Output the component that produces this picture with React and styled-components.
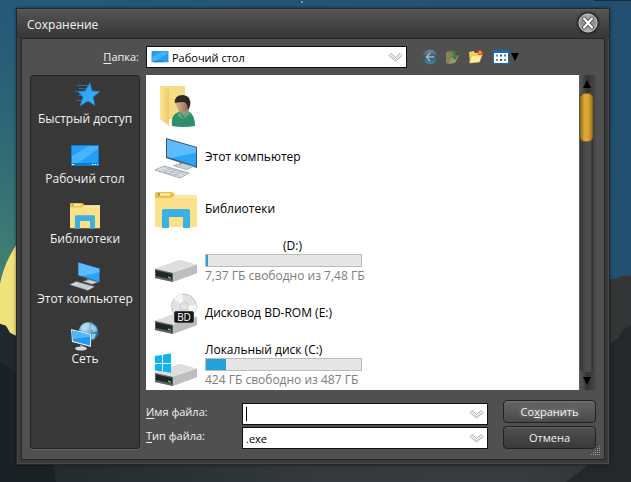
import React from 'react';
import styled, { createGlobalStyle } from 'styled-components';

const colors = {
  frame: '#3a3a3a',
  frameDark: '#262626',
  client: '#505050',
  panel: '#383838',
  text: '#f2f2f2',
  blue: '#26a0da',
};

const fonts = {
  ui: '"Open Sans", "Noto Sans", sans-serif',
};

const GlobalStyle = createGlobalStyle`
  * {
    box-sizing: border-box;
  }
  body {
    margin: 0;
    font-family: ${fonts.ui};
    font-size: 12px;
  }
  button, input, select {
    font: inherit;
  }
`;

/* ---------- icons ---------- */

const StarIcon = () => (
  <svg width="30" height="30" viewBox="0 0 30 30">
    <defs>
      <linearGradient id="star" x1="0" y1="0" x2="1" y2="1">
        <stop offset="0" stopColor="#2b9bf0" />
        <stop offset="1" stopColor="#39b2ff" />
      </linearGradient>
    </defs>
    <path d="M7 4.500h11M9 7.500h8M5 10.500h7M8 14.500h6M6 19.500h5" stroke="#2270ad" strokeWidth="1" />
    <path d="M20 2l2 8 8 .5-7 5.500 2 8.500-7-4.500-8 5 3-9-5-5.500 7-.5z" fill="url(#star)" stroke="#1c7ccc" strokeWidth=".7" />
  </svg>
);

const DesktopIcon = ({ width = 30, height = 30 }) => (
  <svg width={width} height={height} viewBox="0 0 30 30" preserveAspectRatio="none">
    <path d="M1 4h28v21H1z" fill="#0f7ed2" />
    <path d="M2 5h26v17H2z" fill="#22a0f8" />
    <path d="M2 22V15L19 5h9v3L8 22z" fill="#48b4ff" />
    <path d="M2 23.500h2M22 23.500h1.500M24.500 23.500h1.500M27 23.500h1" stroke="#fff" strokeWidth="1" />
  </svg>
);

const LibraryIcon = ({ size = 30 }) => (
  <svg width={size} height={size} viewBox="0 0 42 42">
    <path d="M0 5q0-2 2-2h14q3 0 4 3H42v31q0 1-1 1H1q-1 0-1-1z" fill="#fbe08c" />
    <path d="M0 5q0-2 2-2h14q2 0 4 3-2 3-4 3H0z" fill="#f0c13a" />
    <path d="M4 4.500h11v2H4z" fill="#fff5cf" />
    <path d="M3 4.500h2v2H3z" fill="#4a9bc9" />
    <path d="M0 9h17l3-3h22v3z" fill="#fde79f" />
    <path d="M7 39V22q0-2 2-2h24q2 0 2 2v17h-7V28H14v11z" fill="#3cb0e0" />
  </svg>
);

const ComputerIcon = ({ size = 30 }) => (
  <svg width={size} height={size} viewBox="0 0 42 42">
    <path d="M11 1l31 9v21l-31-10z" fill="#3d5566" />
    <path d="M12 2.500l29 8.300v18.400L12 19.700z" fill="#2aa4f8" />
    <path d="M12 2.500l29 8.300v5L16 21 12 19.700z" fill="#5dbcff" />
    <path d="M24 25l6 2v3l-6-1z" fill="#8f9ba6" />
    <path d="M18 28.500l10-2 11 3-8 3z" fill="#cbd3da" stroke="#8896a2" strokeWidth=".6" />
    <path d="M0 33l9-4 25 7-9 5z" fill="#e4e8ec" stroke="#8f99a3" strokeWidth=".8" />
    <path d="M3 33.500l23 6M6 32l23 6M9 30.500l22 6M8 35.500l8-4M13 37l8-4M19 38.500l8-4" stroke="#a2abb4" strokeWidth=".7" />
  </svg>
);

const NetworkIcon = () => (
  <svg width="30" height="30" viewBox="0 0 30 30">
    <defs>
      <radialGradient id="globe" cx=".35" cy=".3" r=".8">
        <stop offset="0" stopColor="#c4e6f7" />
        <stop offset=".5" stopColor="#4e9cc8" />
        <stop offset="1" stopColor="#1d5b8c" />
      </radialGradient>
    </defs>
    <circle cx="18.500" cy="11" r="10" fill="url(#globe)" />
    <path d="M11 5q4-4 8-3l1 3-4 2-1 3-4-1zM21 3l5 3 1 4-3 1-3-3zM22 13l4 0-2 5-3 0z" fill="#b9dcea" opacity=".75" />
    <path d="M1 8l20 5v13L2 21z" fill="#d6eefc" />
    <path d="M2 9.500l18 4.300V24.500L3 20z" fill="#2297ee" />
    <path d="M2 9.500l18 4.300v2L3 18z" fill="#53b6fb" />
    <path d="M10 24l4 1v2h-4z" fill="#9aa5ad" />
    <ellipse cx="11" cy="27.500" rx="6" ry="2" fill="#d3d9dd" />
  </svg>
);

const UserFolderIcon = () => (
  <svg width="42" height="42" viewBox="0 0 42 42">
    <defs>
      <linearGradient id="flap" x1="0" x2="1">
        <stop offset="0" stopColor="#fbe49a" />
        <stop offset="1" stopColor="#eec964" />
      </linearGradient>
      <linearGradient id="face" x1="0" x2="1">
        <stop offset="0" stopColor="#e0b896" />
        <stop offset="1" stopColor="#8d6850" />
      </linearGradient>
    </defs>
    <path d="M5 1h25v33H9z" fill="#f6db85" />
    <path d="M5 1l9 4v36l-9-7z" fill="url(#flap)" />
    <path d="M17 41q-1-9 3-12l5-3h8q7 3 7 15-12 2-23 0z" fill="#2f8f69" />
    <path d="M24 26l5 5 4-6v-3h-9z" fill="#b98e70" />
    <path d="M24 26l4 8-5-3zM33 25l-5 9 7-5z" fill="#56b18d" />
    <path d="M20 17q0-6 7-6t7 6q0 10-6 10t-8-10z" fill="url(#face)" />
    <path d="M20 18q-1-8 8-8 9 1 7 11l-2 5q0-8-4-9-5 0-9 1z" fill="#2c2826" />
  </svg>
);

const DriveBody = () => (
  <>
    <path d="M0 28l25-9 17 5v8L17 41 0 37z" fill="#b4b4b6" />
    <path d="M0 28l25-9 17 5-24 8z" fill="#dedee0" />
    <path d="M18 32l24-8v8l-24 9z" fill="#bdbdc0" />
    <path d="M0 28l18 4v9L0 37z" fill="#5c6060" />
    <path d="M1 29.500l16 3.500v5.500L1 35z" fill="#202424" />
    <path d="M13 35.500l3 .7v1.500l-3-.7z" fill="#46d264" />
  </>
);

const DriveIcon = () => (
  <svg width="42" height="42" viewBox="0 0 42 42">
    <DriveBody />
  </svg>
);

const DiscDriveIcon = () => (
  <svg width="42" height="42" viewBox="0 0 42 42">
    <DriveBody />
    <circle cx="29" cy="13.500" r="12.500" fill="#dfe3e2" stroke="#b9bfbe" strokeWidth=".8" />
    <path d="M29 13.500L19 6q3-4 8-5zM29 13.500l10 7q3-4 2-9z" fill="#f6f8f7" />
    <circle cx="29" cy="13.500" r="4" fill="#f1f3f3" stroke="#b0b6b6" strokeWidth=".8" />
    <circle cx="29" cy="13.500" r="1.800" fill="#fff" stroke="#aab0b0" strokeWidth=".6" />
    <rect x="19.500" y="18.500" width="19" height="11" rx="1.500" fill="#161616" stroke="#454545" />
    <text x="29" y="28" textAnchor="middle" fontSize="10" fill="#fff" fontFamily="Open Sans, sans-serif">BD</text>
  </svg>
);

const SystemDriveIcon = () => (
  <svg width="42" height="42" viewBox="0 0 42 42">
    <DriveBody />
    <path d="M0 11l7-1v8H0zM8 9.800l8-1.300V18H8zM0 19h7v7.500l-7-1zM8 19h8v8.800l-8-1.200z" fill="#0fb3ee" />
  </svg>
);

const Chevrons = () => (
  <svg width="15" height="10" viewBox="0 0 15 10" fill="none">
    <path d="M1 3.500L3 1.500l4.500 4 4.500-4 2 2-6.500 5.500z" stroke="#a9a9a9" strokeWidth="1" />
    <path d="M3 3.500l4.500 4 4.500-4" stroke="#d4d4d4" strokeWidth="1" />
  </svg>
);

const BackIcon = () => (
  <svg width="16" height="16" viewBox="0 0 16 16">
    <defs>
      <linearGradient id="back" x1="0" y1="0" x2="0" y2="1">
        <stop offset="0" stopColor="#7d8b94" />
        <stop offset=".5" stopColor="#33566d" />
        <stop offset="1" stopColor="#4a86a8" />
      </linearGradient>
    </defs>
    <circle cx="8" cy="8" r="7.300" fill="url(#back)" />
    <path d="M12.500 8H5M8 4L4.500 8 8 12" fill="none" stroke="#a5b4be" strokeWidth="1.600" />
  </svg>
);

const UpIcon = () => (
  <svg width="16" height="16" viewBox="0 0 16 16">
    <path d="M1 3l5-1 1 2h3v9l-6 2-3-1z" fill="#84835c" />
    <path d="M4 15l3-7 7-2-4 8z" fill="#98976d" />
    <path d="M5 2q6-2 6 4h2l-3 5-4-4h2q0-4-3-5z" fill="#3c8239" />
  </svg>
);

const NewFolderIcon = () => (
  <svg width="16" height="16" viewBox="0 0 16 16">
    <path d="M1 3l5-1 1 2h5v9l-10 1z" fill="#f2cf62" />
    <path d="M1.500 14l2-7 11-2-3 8z" fill="#fff0a0" stroke="#e0b444" strokeWidth=".6" />
    <path d="M12 .5v6M9 3.500h6M10 1.500l4 4M14 1.500l-4 4" stroke="#e2521d" strokeWidth="1.200" />
    <circle cx="12" cy="3.500" r="1.300" fill="#ffb347" />
  </svg>
);

const ViewIcon = () => (
  <svg width="16" height="16" viewBox="0 0 16 16">
    <path d="M0 1h16v14H0z" fill="#1769bd" />
    <path d="M1 4h14v10H1z" fill="#fff" />
    <path d="M3 5.500h2v2H3zM11 10h2v2h-2z" fill="#5f8fb0" />
    <path d="M7 5.500h2v2H7zM7 10h2v2H7z" fill="#27489b" />
    <path d="M11 5.500h2v2h-2z" fill="#3b9150" />
    <path d="M3 10h2v2H3z" fill="#d0695a" />
  </svg>
);

const Arrow = ({ up }) => (
  <svg width="8" height="8" viewBox="0 0 8 8">
    <path d={up ? 'M4 0l4 8H0z' : 'M0 0h8L4 8z'} fill="#000" />
  </svg>
);

const CloseIcon = () => (
  <svg width="20" height="20" viewBox="0 0 20 20">
    <defs>
      <linearGradient id="close" x1="0" y1="0" x2="0" y2="1">
        <stop offset="0" stopColor="#b0b0b0" />
        <stop offset=".5" stopColor="#8c8c8c" />
        <stop offset="1" stopColor="#b4b4b4" />
      </linearGradient>
    </defs>
    <circle cx="10" cy="10" r="9" fill="url(#close)" stroke="#c4c4c4" strokeWidth="1" />
    <path d="M6 5.500l8 9M14 5.500l-8 9" stroke="#4a4a4a" strokeWidth="4" strokeLinecap="round" />
    <path d="M6 5.500l8 9M14 5.500l-8 9" stroke="#fff" strokeWidth="2.200" strokeLinecap="round" />
  </svg>
);

const Grip = () => (
  <svg width="10" height="10" viewBox="0 0 10 10">
    <path
      d="M8 0h1v1H8zM6 2h1v1H6zM8 2h1v1H8zM4 4h1v1H4zM6 4h1v1H6zM8 4h1v1H8zM2 6h1v1H2zM4 6h1v1H4zM6 6h1v1H6zM8 6h1v1H8zM0 8h1v1H0zM2 8h1v1H2zM4 8h1v1H4zM6 8h1v1H6zM8 8h1v1H8z"
      fill="#9a9a9a"
    />
  </svg>
);

const Landscape = () => (
  <Backdrop viewBox="0 0 631 482" preserveAspectRatio="none" aria-hidden="true">
    <defs>
      <linearGradient id="sky" x1="0" y1="0" x2="0" y2="1">
        <stop offset="0" stopColor="#25587a" />
        <stop offset=".25" stopColor="#2c6676" />
        <stop offset=".55" stopColor="#417f73" />
        <stop offset="1" stopColor="#5d9a78" />
      </linearGradient>
      <linearGradient id="night" x1="0" x2="1">
        <stop offset="0" stopColor="#224f70" stopOpacity="0" />
        <stop offset="1" stopColor="#224f70" />
      </linearGradient>
      <linearGradient id="hill" x1="0" x2="1">
        <stop offset="0" stopColor="#1f282c" />
        <stop offset=".5" stopColor="#33393d" />
        <stop offset=".8" stopColor="#363c40" />
        <stop offset="1" stopColor="#333536" />
      </linearGradient>
    </defs>
    <path d="M0 0h631v482H0z" fill="url(#sky)" />
    <path d="M0 0h631v482H0z" fill="url(#night)" />
    <circle cx="100" cy="303" r="102" fill="#efe27c" />
    <path d="M0 323l6 2 4 7 6 3 50 10 480-56 60-10 10-1 4-2 11-1v207H0z" fill="url(#hill)" />
    <path d="M0 361l16 12v50l36 30 4 29H0z" fill="#192125" />
    <path d="M631 324l-7 4-6 10-9 5v60l-20 60-24 19h66z" fill="#24282b" />
    <path d="M594 0h37v1h-37z" fill="#1c2c38" />
    <circle cx="302" cy="2" r="1" fill="#8fb0b8" />
  </Backdrop>
);

/* ---------- data ---------- */

const places = [
  { name: 'Быстрый доступ', icon: <StarIcon /> },
  { name: 'Рабочий стол', icon: <DesktopIcon /> },
  { name: 'Библиотеки', icon: <LibraryIcon /> },
  { name: 'Этот компьютер', icon: <ComputerIcon /> },
  { name: 'Сеть', icon: <NetworkIcon /> },
];

const items = [
  { id: 'user', name: '', icon: <UserFolderIcon /> },
  { id: 'pc', name: 'Этот компьютер', icon: <ComputerIcon size={42} /> },
  { id: 'lib', name: 'Библиотеки', icon: <LibraryIcon size={42} /> },
  { id: 'd', name: '(D:)', centered: true, used: 1.5, free: '7,37 ГБ свободно из 7,48 ГБ', icon: <DriveIcon /> },
  { id: 'e', name: 'Дисковод BD-ROM (E:)', icon: <DiscDriveIcon /> },
  { id: 'c', name: 'Локальный диск (C:)', used: 13, free: '424 ГБ свободно из 487 ГБ', icon: <SystemDriveIcon /> },
];

const App = () => (
  <>
    <GlobalStyle />
    <Desktop>
      <Landscape />
      <Dialog role="dialog" aria-labelledby="title">
        <TitleBar>
          <Title id="title">Сохранение</Title>
          <CloseButton type="button" aria-label="Закрыть"><CloseIcon /></CloseButton>
        </TitleBar>
        <Client>
          <FolderLabel htmlFor="folder"><u>П</u>апка:</FolderLabel>
          <TopRow>
            <Field>
              <FieldIcon><DesktopIcon width={18} height={16} /></FieldIcon>
              <Select id="folder" $withIcon defaultValue="desktop">
                <option value="desktop">Рабочий стол</option>
              </Select>
              <FieldArrow><Chevrons /></FieldArrow>
            </Field>
            <Toolbar>
              <ToolButton type="button" aria-label="Назад"><BackIcon /></ToolButton>
              <ToolButton type="button" aria-label="Вверх"><UpIcon /></ToolButton>
              <ToolButton type="button" aria-label="Новая папка"><NewFolderIcon /></ToolButton>
              <ToolButton type="button" aria-label="Вид"><ViewIcon /><Arrow /></ToolButton>
            </Toolbar>
          </TopRow>
          <Places>
            {places.map((place) => (
              <Place key={place.name} type="button">
                {place.icon}
                <span>{place.name}</span>
              </Place>
            ))}
          </Places>
          <Browser>
            <FileList>
              {items.map((item) => (
                <FileRow key={item.id}>
                  {item.icon}
                  <FileInfo>
                    <FileName $centered={item.centered}>{item.name}</FileName>
                    {item.free && (
                      <>
                        <Capacity><span style={{ width: `${item.used}%` }} /></Capacity>
                        <FreeSpace>{item.free}</FreeSpace>
                      </>
                    )}
                  </FileInfo>
                </FileRow>
              ))}
            </FileList>
            <Scrollbar>
              <ScrollButton type="button" aria-label="Прокрутить вверх"><Arrow up /></ScrollButton>
              <Track><Thumb /></Track>
              <ScrollButton type="button" aria-label="Прокрутить вниз"><Arrow /></ScrollButton>
            </Scrollbar>
          </Browser>
          <Form>
            <Fields>
              <Label htmlFor="name"><u>И</u>мя файла:</Label>
              <Field>
                <Input id="name" type="text" />
                <Caret />
                <FieldArrow><Chevrons /></FieldArrow>
              </Field>
              <Label htmlFor="type"><u>Т</u>ип файла:</Label>
              <Field>
                <Select id="type" defaultValue="exe">
                  <option value="exe">.exe</option>
                </Select>
                <FieldArrow><Chevrons /></FieldArrow>
              </Field>
            </Fields>
            <Actions>
              <ActionButton type="button" $primary>Со<u>х</u>ранить</ActionButton>
              <ActionButton type="button">Отмена</ActionButton>
            </Actions>
          </Form>
          <GripCorner><Grip /></GripCorner>
        </Client>
      </Dialog>
    </Desktop>
  </>
);

/* ---------- styles ---------- */

const Desktop = styled.div`
  position: relative;
  min-height: 100vh;
  padding: 8px 21px 18px 16px;
  display: flex;
  overflow: hidden;
`;

const Backdrop = styled.svg`
  position: absolute;
  inset: 0;
  width: 100%;
  height: 100%;
`;

const Dialog = styled.main`
  position: relative;
  flex: 1;
  min-width: 0;
  display: flex;
  flex-direction: column;
  padding: 0 4px 4px;
  background: ${colors.frame};
  border: 1px solid ${colors.frameDark};
  box-shadow: inset 0 0 0 1px #484848, 0 0 3px rgba(0, 0, 0, 0.5);
`;

const TitleBar = styled.header`
  display: flex;
  align-items: center;
  justify-content: space-between;
  height: 29px;
  margin: 0 -4px;
  padding: 0 11px 2px 10px;
  background: linear-gradient(#545454, #363636);
  border-top: 1px solid #5e5e5e;
`;

const Title = styled.h1`
  margin: 0;
  padding-top: 2px;
  color: ${colors.text};
  font-size: 12px;
  font-weight: 400;
`;

const CloseButton = styled.button`
  display: flex;
  padding: 0;
  border: 0;
  border-radius: 50%;
  background: none;
  box-shadow: 0 0 2px 1px #222;
`;

const Client = styled.div`
  position: relative;
  flex: 1;
  display: grid;
  grid-template-columns: 110px minmax(0, 1fr);
  grid-template-rows: 22px minmax(315px, 1fr) auto;
  column-gap: 6px;
  row-gap: 7px;
  padding: 7px 8px 10px;
  background: ${colors.client};
  border: 1px solid ${colors.frameDark};
`;

const Label = styled.label`
  color: ${colors.text};
  font-size: 11px;
  line-height: 18px;
  u {
    text-underline-offset: 2px;
  }
`;

const FolderLabel = styled(Label)`
  justify-self: end;
  align-self: center;
  padding-right: 1px;
`;

const TopRow = styled.div`
  display: flex;
  gap: 15px;
`;

const Field = styled.div`
  position: relative;
  flex: 1;
  height: 22px;
  min-width: 0;
`;

const Input = styled.input`
  display: block;
  width: 100%;
  height: 100%;
  padding: 0 24px 0 3px;
  color: #000;
  font-size: 11px;
  background: #fff;
  border: 1px solid #111;
  border-radius: 0;
  outline: 0;
`;

const Select = styled(Input).attrs({ as: 'select' })`
  appearance: none;
  padding-left: ${(props) => (props.$withIcon ? '25px' : '3px')};
`;

const FieldIcon = styled.span`
  position: absolute;
  top: 3px;
  left: 5px;
  display: flex;
  pointer-events: none;
`;

const FieldArrow = styled.span`
  position: absolute;
  top: 6px;
  right: 4px;
  display: flex;
  pointer-events: none;
`;

const Caret = styled.span`
  position: absolute;
  top: 4px;
  left: 4px;
  width: 1px;
  height: 14px;
  background: #000;
`;

const Toolbar = styled.div`
  display: flex;
  align-items: center;
  gap: 7px;
  width: 174px;
`;

const ToolButton = styled.button`
  display: flex;
  align-items: center;
  gap: 2px;
  padding: 0;
  border: 0;
  background: none;
  & + &:last-child {
    margin-left: 2px;
  }
`;

const Places = styled.nav`
  grid-row: 2 / 4;
  display: flex;
  flex-direction: column;
  gap: 12px;
  padding-top: 5px;
  background: ${colors.panel};
  border: 1px solid #242424;
  border-radius: 3px;
  box-shadow: 0 1px 0 #626262;
`;

const Place = styled.button`
  display: flex;
  flex-direction: column;
  align-items: center;
  height: 48px;
  padding: 0;
  border: 0;
  background: none;
  color: ${colors.text};
  line-height: 16px;
  white-space: nowrap;
`;

const Browser = styled.section`
  display: flex;
  min-width: 0;
`;

const FileList = styled.ul`
  flex: 1;
  min-width: 0;
  display: flex;
  flex-direction: column;
  gap: 10px;
  margin: 0;
  padding: 10px 8px 3px 9px;
  background: #fff;
  list-style: none;
`;

const FileRow = styled.li`
  display: flex;
  align-items: center;
  gap: 8px;
  height: 42px;
`;

const FileInfo = styled.div`
  display: flex;
  flex-direction: column;
  width: 157px;
  padding-bottom: 2px;
  white-space: nowrap;
`;

const FileName = styled.span`
  color: #000;
  line-height: 16px;
  padding-left: ${(props) => (props.$centered ? '78px' : '0')};
`;

const Capacity = styled.div`
  height: 13px;
  background: #e6e6e6;
  border: 1px solid #bcbcbc;
  span {
    display: block;
    height: 100%;
    background: ${colors.blue};
  }
`;

const FreeSpace = styled.span`
  color: #7c7c7c;
  line-height: 18px;
`;

const Scrollbar = styled.div`
  display: flex;
  flex-direction: column;
  width: 17px;
  padding-right: 2px;
  background: linear-gradient(90deg, #5c5c5c, #333 50%, #4a4a4a);
`;

const ScrollButton = styled.button`
  display: flex;
  align-items: center;
  justify-content: center;
  height: 18px;
  padding: 0;
  border: 0;
  background: none;
`;

const Track = styled.div`
  flex: 1;
  margin: 0 1px;
  background: linear-gradient(90deg, #343434, #4c4c4c 45%, #4c4c4c 80%, #2c2c2c);
  border-radius: 4px;
`;

const Thumb = styled.div`
  height: 49px;
  background: linear-gradient(90deg, #a87a1c, #dcaa38 35%, #d9a533 65%, #a8781a);
  border: 1px solid #8a671d;
  border-radius: 5px;
`;

const Form = styled.form`
  display: flex;
  gap: 15px;
  padding-top: 3px;
`;

const Fields = styled.div`
  flex: 1;
  min-width: 0;
  display: grid;
  grid-template-columns: 90px minmax(0, 1fr);
  column-gap: 6px;
  row-gap: 2px;
  padding-top: 3px;
`;

const Actions = styled.div`
  display: flex;
  flex-direction: column;
  gap: 3px;
  width: 93px;
`;

const ActionButton = styled.button`
  height: 23px;
  padding: 0;
  color: ${colors.text};
  font-size: 11px;
  line-height: 16px;
  background: ${(props) => (props.$primary ? 'linear-gradient(#666, #484848)' : 'linear-gradient(#505050, #3a3a3a)')};
  border: 1px solid #202020;
  border-radius: 4px;
  box-shadow: inset 0 1px 0 rgba(255, 255, 255, 0.1);
  text-shadow: ${(props) => (props.$primary ? '0 0 5px rgba(255, 255, 255, 0.5)' : 'none')};
`;

const GripCorner = styled.span`
  position: absolute;
  right: 3px;
  bottom: 3px;
  display: flex;
`;

export default App;
